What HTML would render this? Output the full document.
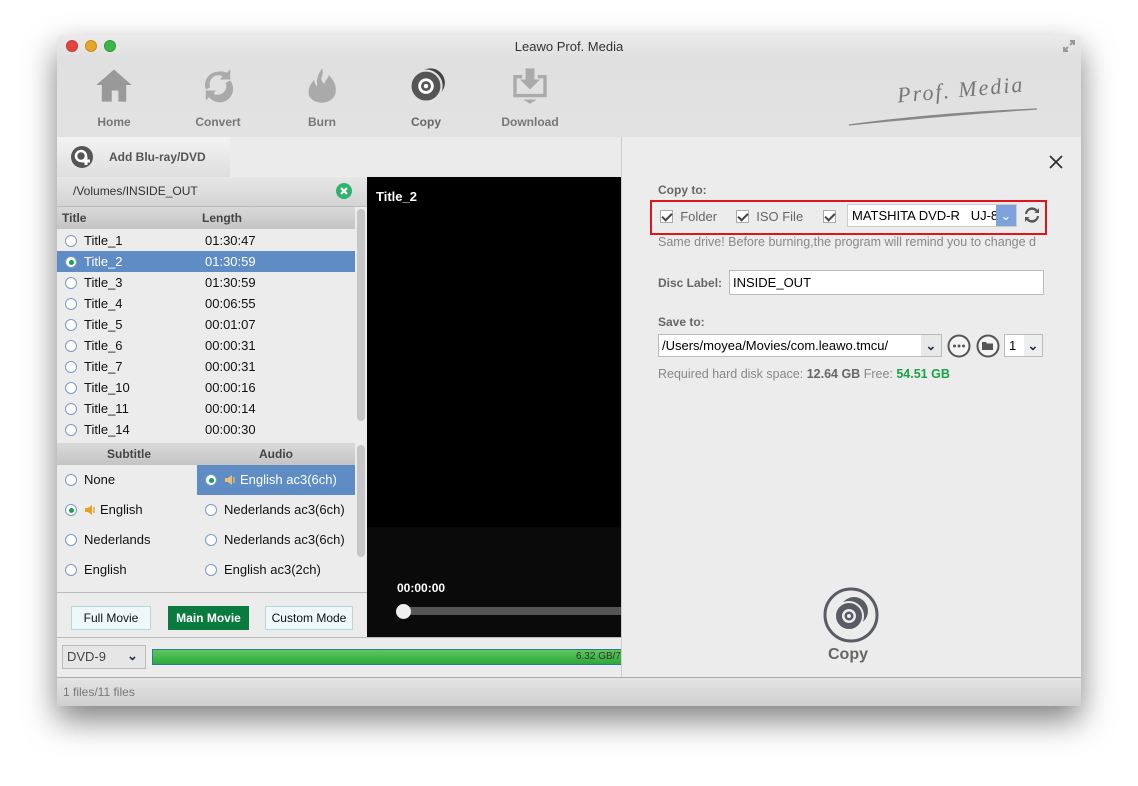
<!DOCTYPE html>
<html><head><meta charset="utf-8"><style>
*{box-sizing:border-box;margin:0;padding:0}
body{width:1138px;height:786px;background:#fff;font-family:"Liberation Sans",sans-serif;position:relative;overflow:hidden;font-size:13px}
.a{position:absolute}
.win{left:57px;top:35px;width:1024px;height:671px;background:#ececec;box-shadow:0 14px 32px rgba(0,0,0,.5);border-radius:5px 5px 0 0;overflow:hidden}
.tb{left:0;top:0;width:1024px;height:102px;background:linear-gradient(#ebebeb,#e0e0e0 22px,#e2e2e2)}
.tl{width:12px;height:12px;border-radius:50%;top:5px}
.ti{font-size:13px;color:#333;top:4px;left:0;width:1024px;text-align:center}
.tool{top:30px;width:90px;text-align:center;font-weight:bold;color:#777;font-size:12px}
.tool svg{display:block;margin:0 auto 10px}
.row{left:0;width:298px;height:21px;line-height:21px;color:#111}
.rad{display:inline-block;width:12px;height:12px;border-radius:50%;border:1px solid #7a9ac0;background:#fff;vertical-align:-2px;margin:0 7px 0 8px;position:relative}
.rad.on:after{content:"";position:absolute;left:2.5px;top:2.5px;width:5px;height:5px;border-radius:50%;background:#16a34a}
.cb{display:inline-block;width:13px;height:13px;background:#fff;border:1px solid #aaa;position:relative;vertical-align:-2px}
.cb:after{content:"";position:absolute;left:3px;top:0px;width:4px;height:8px;border:solid #444;border-width:0 2px 2px 0;transform:rotate(45deg)}
.sa{height:30px;line-height:30px;color:#111}
.sp{display:inline-block;vertical-align:-2px;margin-right:4px}
.btn{top:571px;height:24px;line-height:22px;text-align:center;font-size:12px;border:1px solid #b8d8d8;background:#eef8fa;color:#111}
</style></head><body>
<div class="a win">
 <div class="a tb"></div>
 <div class="a tl" style="left:9px;background:#e0443e;border:1px solid #c33"></div>
 <div class="a tl" style="left:28px;background:#e5a72a;border:1px solid #c88a1a"></div>
 <div class="a tl" style="left:47px;background:#3eb64a;border:1px solid #2a9a35"></div>
 <div class="a ti">Leawo Prof. Media</div>
 <svg class="a" style="left:1005px;top:4px" width="14" height="14"><path d="M8 2h4v4M12 2L8 6M2 8v4h4M2 12l4-4" stroke="#999" stroke-width="2" fill="none"/></svg>
 <div class="a tool" style="left:12px"><svg width="40" height="40" viewBox="0 0 36 34"><path d="M18 3L2 17h5v15h9v-10h6v10h7V17h5z" fill="#999"/></svg>Home</div>
 <div class="a tool" style="left:116px"><svg width="40" height="40" viewBox="0 0 36 34"><path d="M18 5a12 12 0 0 0-11 16l4-2a8 8 0 0 1 11-10l-2 3h9V3l-3 3a12 12 0 0 0-8-1zM29 13l-4 2a8 8 0 0 1-11 10l2-3H7v9l3-3a12 12 0 0 0 19-15z" fill="#aaa"/></svg>Convert</div>
 <div class="a tool" style="left:220px"><svg width="40" height="40" viewBox="0 0 36 34"><path d="M18 2c3 6-4 8 2 14 1-4 4-5 4-8 4 4 8 10 6 17-2 6-8 8-12 8S7 31 6 25c-1-6 3-10 5-13 0 3 1 5 3 6-2-6 1-11 4-16z" fill="#aaa"/></svg>Burn</div>
 <div class="a tool" style="left:324px;color:#666"><svg width="40" height="40" viewBox="0 0 36 34"><circle cx="22" cy="15" r="13" fill="#444"/><circle cx="18" cy="18" r="14" fill="#555" stroke="#e2e2e2" stroke-width="2"/><circle cx="18" cy="18" r="7" fill="#fff"/><circle cx="18" cy="18" r="4.5" fill="#555"/><circle cx="18" cy="18" r="2" fill="#fff"/></svg>Copy</div>
 <div class="a tool" style="left:428px"><svg width="40" height="40" viewBox="0 0 36 34"><path d="M3 8h8v3H6v14h24V11h-5V8h8v20H3z M14 2h8v10h5l-9 9-9-9h5z M12 30h12l-6 4z" fill="#aaa"/></svg>Download</div>
 <div class="a" style="left:840px;top:42px;font-family:'Liberation Serif',serif;font-style:italic;font-size:22px;color:#777;transform:rotate(-5deg);letter-spacing:2px">Prof. Media</div>
 <svg class="a" style="left:790px;top:68px" width="200" height="25"><path d="M2 22Q90 10 190 6Q100 12 2 22z" stroke="#888" stroke-width="1.2" fill="#888"/></svg>

 <div class="a" style="left:0;top:102px;width:564px;height:40px;background:#ebebeb"></div>
 <div class="a" style="left:0;top:102px;width:173px;height:40px;background:linear-gradient(#f3f3f3,#dedede);font-weight:bold;color:#555;font-size:12px;line-height:40px;padding-left:52px">Add Blu-ray/DVD</div>
 <svg class="a" style="left:14px;top:111px" width="22" height="22"><circle cx="11" cy="11" r="11" fill="#555"/><circle cx="10" cy="10" r="5" fill="none" stroke="#fff" stroke-width="2.5"/><path d="M15 11v8M11 15h8" stroke="#fff" stroke-width="3"/></svg>
 <div class="a" style="left:0;top:142px;width:310px;height:30px;background:linear-gradient(#e6e6e6,#d4d4d4);border-bottom:1px solid #bbb;line-height:28px;padding-left:16px;color:#333;font-size:12px">/Volumes/INSIDE_OUT</div>
 <svg class="a" style="left:279px;top:148px" width="16" height="16"><circle cx="8" cy="8" r="8" fill="#2db36a"/><path d="M5 5l6 6M11 5l-6 6" stroke="#fff" stroke-width="2.2"/></svg>
 <div class="a" style="left:0;top:172px;width:298px;height:22px;background:linear-gradient(#d9d9d9,#c4c4c4);font-weight:bold;color:#444;font-size:12px;line-height:22px"><span class="a" style="left:5px">Title</span><span class="a" style="left:145px">Length</span></div>
 <div class="a" style="left:0;top:194px;width:298px;height:214px;background:#ececec"></div>
 <div class="a" style="left:298px;top:172px;width:12px;height:400px;background:#ececec"></div>
 <div class="a" style="left:300px;top:174px;width:8px;height:212px;border-radius:4px;background:#c6c6c6"></div>
 <div class="a" style="left:300px;top:410px;width:8px;height:112px;border-radius:4px;background:#c6c6c6"></div>
 <div class="a" style="left:0;top:195px">
  <div class="a row" style="top:0"><span class="rad"></span>Title_1<span class="a" style="left:148px">01:30:47</span></div>
  <div class="a row" style="top:21px;background:#5f8cc4;color:#fff"><span class="rad on"></span>Title_2<span class="a" style="left:148px">01:30:59</span></div>
  <div class="a row" style="top:42px"><span class="rad"></span>Title_3<span class="a" style="left:148px">01:30:59</span></div>
  <div class="a row" style="top:63px"><span class="rad"></span>Title_4<span class="a" style="left:148px">00:06:55</span></div>
  <div class="a row" style="top:84px"><span class="rad"></span>Title_5<span class="a" style="left:148px">00:01:07</span></div>
  <div class="a row" style="top:105px"><span class="rad"></span>Title_6<span class="a" style="left:148px">00:00:31</span></div>
  <div class="a row" style="top:126px"><span class="rad"></span>Title_7<span class="a" style="left:148px">00:00:31</span></div>
  <div class="a row" style="top:147px"><span class="rad"></span>Title_10<span class="a" style="left:148px">00:00:16</span></div>
  <div class="a row" style="top:168px"><span class="rad"></span>Title_11<span class="a" style="left:148px">00:00:14</span></div>
  <div class="a row" style="top:189px"><span class="rad"></span>Title_14<span class="a" style="left:148px">00:00:30</span></div>
 </div>
 <div class="a" style="left:0;top:408px;width:298px;height:22px;background:linear-gradient(#d9d9d9,#c4c4c4);font-weight:bold;color:#444;font-size:12px;line-height:22px"><span class="a" style="left:50px">Subtitle</span><span class="a" style="left:202px">Audio</span></div>
 <div class="a" style="left:0;top:430px;width:298px;height:128px;background:#ececec;overflow:hidden">
  <div class="a sa" style="left:0;top:0"><span class="rad"></span>None</div>
  <div class="a sa" style="left:0;top:30px"><span class="rad on"></span><svg class="sp" width="12" height="12"><path d="M1 4h3l4-3v10L4 8H1z" fill="#e8a020"/><path d="M10 3v6" stroke="#e8a020" stroke-width="1.3"/></svg>English</div>
  <div class="a sa" style="left:0;top:60px"><span class="rad"></span>Nederlands</div>
  <div class="a sa" style="left:0;top:90px"><span class="rad"></span>English</div>
  <div class="a sa" style="left:0;top:120px"><span class="rad"></span>Nederlands</div>
  <div class="a sa" style="left:140px;top:0;width:158px;background:#5f8cc4;color:#fff"><span class="rad on"></span><svg class="sp" width="12" height="12"><path d="M1 4h3l4-3v10L4 8H1z" fill="#e8c070"/><path d="M10 3v6" stroke="#e8c070" stroke-width="1.3"/></svg>English ac3(6ch)</div>
  <div class="a sa" style="left:140px;top:30px"><span class="rad"></span>Nederlands ac3(6ch)</div>
  <div class="a sa" style="left:140px;top:60px"><span class="rad"></span>Nederlands ac3(6ch)</div>
  <div class="a sa" style="left:140px;top:90px"><span class="rad"></span>English ac3(2ch)</div>
 </div>
 <div class="a" style="left:0;top:557px;width:310px;height:1px;background:#bbb"></div>
 <div class="a btn" style="left:14px;width:80px">Full Movie</div>
 <div class="a btn" style="left:111px;width:81px;background:#0b7a3e;border-color:#0b7a3e;color:#fff;font-weight:bold">Main Movie</div>
 <div class="a btn" style="left:208px;width:88px">Custom Mode</div>
 <div class="a" style="left:310px;top:142px;width:254px;height:460px;background:#000"></div>
 <div class="a" style="left:310px;top:492px;width:254px;height:110px;background:#0a0a0a"></div>
 <div class="a" style="left:319px;top:154px;color:#fff;font-weight:bold;font-size:13px">Title_2</div>
 <div class="a" style="left:340px;top:546px;color:#fff;font-weight:bold;font-size:12px">00:00:00</div>
 <div class="a" style="left:346px;top:572px;width:218px;height:8px;background:#555"></div>
 <div class="a" style="left:339px;top:569px;width:15px;height:15px;border-radius:50%;background:#eee"></div>
 <div class="a" style="left:0;top:602px;width:564px;height:40px;background:#ececec;border-top:1px solid #bbb"></div>
 <div class="a" style="left:5px;top:610px;width:84px;height:24px;border:1px solid #bbb;background:#e6e6e6;line-height:22px;padding-left:4px;color:#444;font-size:13px">DVD-9<span class="a" style="left:64px;top:-1px;color:#234;font-weight:bold">⌄</span></div>
 <div class="a" style="left:95px;top:614px;width:469px;height:16px;background:linear-gradient(#5cc85c,#2ea83a);border:1px solid #2a7a9a;border-right:none;text-align:right;font-size:10px;line-height:14px;color:#333;white-space:nowrap;overflow:hidden">6.32 GB/7</div>
 <div class="a" style="left:564px;top:102px;width:460px;height:540px;background:#ececec;border-left:1px solid #ccc"></div>
 <svg class="a" style="left:992px;top:120px" width="14" height="14"><path d="M1 1l12 12M13 1L1 13" stroke="#333" stroke-width="1.8"/></svg>
 <div class="a" style="left:601px;top:148px;font-weight:bold;color:#666;font-size:12px">Copy to:</div>
 <div class="a" style="left:593px;top:165px;width:397px;height:35px;border:2px solid #e0141e"></div>
 <div class="a" style="left:603px;top:174px;color:#666;font-size:13px"><span class="cb"></span>&nbsp;&nbsp;Folder</div>
 <div class="a" style="left:679px;top:174px;color:#666;font-size:13px"><span class="cb"></span>&nbsp;&nbsp;ISO File</div>
 <div class="a" style="left:766px;top:174px"><span class="cb"></span></div>
 <div class="a" style="left:790px;top:169px;width:170px;height:23px;background:#fff;border:1px solid #ccc;line-height:21px;padding-left:4px;color:#000;font-size:13px;overflow:hidden;white-space:nowrap">MATSHITA DVD-R&nbsp;&nbsp;&nbsp;UJ-8<span class="a" style="right:0;top:0;width:20px;height:21px;background:#7da2dc;color:#fff;text-align:center">⌄</span></div>
 <svg class="a" style="left:967px;top:172px" width="16" height="16"><path d="M3 7a5 5 0 0 1 9-2l-2 1h5V1l-1.5 2A7 7 0 0 0 1 7zM13 9a5 5 0 0 1-9 2l2-1H1v5l1.5-2A7 7 0 0 0 15 9z" fill="#555"/></svg>
 <div class="a" style="left:601px;top:200px;color:#888;font-size:12.5px;white-space:nowrap;width:386px;overflow:hidden">Same drive! Before burning,the program will remind you to change d</div>
 <div class="a" style="left:601px;top:241px;font-weight:bold;color:#666;font-size:12px">Disc Label:</div>
 <div class="a" style="left:672px;top:235px;width:315px;height:25px;background:#fff;border:1px solid #bbb;line-height:23px;padding-left:3px;color:#000;font-size:13px">INSIDE_OUT</div>
 <div class="a" style="left:601px;top:280px;font-weight:bold;color:#666;font-size:12px">Save to:</div>
 <div class="a" style="left:601px;top:299px;width:284px;height:23px;background:#fff;border:1px solid #bbb;line-height:21px;padding-left:3px;color:#000;font-size:13px">/Users/moyea/Movies/com.leawo.tmcu/<span class="a" style="right:0;top:0;width:20px;height:21px;background:#e8e8e8;text-align:center;color:#234;font-weight:bold">⌄</span></div>
 <svg class="a" style="left:890px;top:299px" width="24" height="24"><circle cx="12" cy="12" r="10.5" fill="#f4f4f4" stroke="#555" stroke-width="2"/><circle cx="7.5" cy="12" r="1.5" fill="#555"/><circle cx="12" cy="12" r="1.5" fill="#555"/><circle cx="16.5" cy="12" r="1.5" fill="#555"/></svg>
 <svg class="a" style="left:919px;top:299px" width="24" height="24"><circle cx="12" cy="12" r="10.5" fill="#f4f4f4" stroke="#555" stroke-width="2"/><path d="M6 8h4l1 1.5h6V16H6z" fill="#555"/></svg>
 <div class="a" style="left:947px;top:299px;width:39px;height:23px;background:#fff;border:1px solid #bbb;line-height:21px;padding-left:4px;color:#000;font-size:13px">1<span class="a" style="right:0;top:0;width:18px;height:21px;background:#eee;text-align:center;color:#234;font-weight:bold">⌄</span></div>
 <div class="a" style="left:601px;top:332px;color:#888;font-size:12.5px">Required hard disk space: <b style="color:#666">12.64 GB</b> Free: <b style="color:#1aa14a">54.51 GB</b></div>
 <svg class="a" style="left:765px;top:551px" width="58" height="58"><circle cx="29" cy="29" r="26" fill="none" stroke="#595c63" stroke-width="3"/><circle cx="32" cy="25" r="14" fill="#595c63"/><circle cx="27" cy="30" r="14" fill="#595c63" stroke="#ececec" stroke-width="2"/><circle cx="27" cy="30" r="7" fill="#ececec"/><circle cx="27" cy="30" r="4.5" fill="#595c63"/><circle cx="27" cy="30" r="2" fill="#ececec"/></svg>
 <div class="a" style="left:771px;top:611px;font-weight:bold;color:#666;font-size:16px">Copy</div>
 <div class="a" style="left:0;top:642px;width:1024px;height:29px;background:linear-gradient(#e4e4e4,#cfcfcf);border-top:1px solid #aaa;line-height:28px;padding-left:6px;color:#777;font-size:12px">1 files/11 files</div>
</div>
</body></html>
